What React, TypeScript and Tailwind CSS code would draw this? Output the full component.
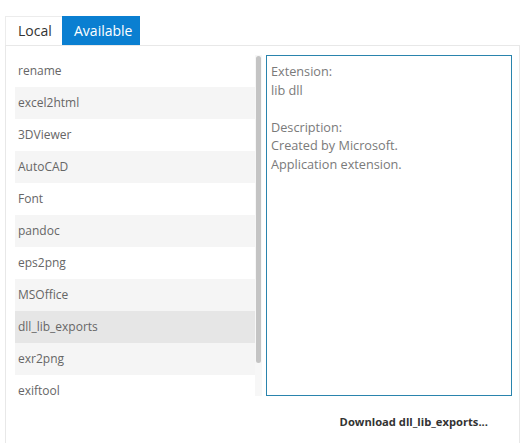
import React from 'react'

const packages = [
  'rename',
  'excel2html',
  '3DViewer',
  'AutoCAD',
  'Font',
  'pandoc',
  'eps2png',
  'MSOffice',
  'dll_lib_exports',
  'exr2png',
  'exiftool',
]

const selected = 'dll_lib_exports'

export default function App() {
  return (
    <div
      className="w-[522px] h-[443px] overflow-hidden bg-white pt-[16px] pl-[5px] pr-[2px]"
      style={{ fontFamily: '"Open Sans", "Noto Sans", sans-serif' }}
    >
      {/* Tabs */}
      <div className="flex h-[29px]">
        <div className="w-[57px] border-l border-t border-[#ececec] text-[14px] text-[#333] pl-[12px] leading-[28px]">
          Local
        </div>
        <div className="w-[78px] bg-[#0a7fd1] text-white text-[14px] pl-[12px] leading-[29px]">
          Available
        </div>
      </div>

      {/* Panel */}
      <div className="w-[515px] h-[420px] border border-[#e8e8e8] pt-[9px] pl-[9px]">
        <div className="flex">
          {/* Package list */}
          <div className="w-[240px] flex flex-col">
            {packages.map((name, i) => (
              <div
                key={name}
                className={
                  'h-[32px] pl-[3px] flex items-center text-[12px] text-[#666] ' +
                  (name === selected ? 'bg-[#e6e6e6]' : i % 2 === 1 ? 'bg-[#f5f5f5]' : 'bg-white')
                }
              >
                {name}
              </div>
            ))}
          </div>

          {/* Scrollbar */}
          <div className="w-[7px] h-[341px] bg-[#f7f7f7] pl-[1px] pt-[1px]">
            <div className="w-[5px] h-[307px] rounded-full bg-[#c4c4c4]" />
          </div>

          {/* Details */}
          <div className="flex flex-col ml-[4px]">
            <div className="w-[246px] h-[341px] border border-[#2a84ad] px-[4px] pt-[6px] text-[12.7px] leading-[18.6px] text-[#7a7a7a]">
              <div>Extension:</div>
              <div>lib dll</div>
              <div className="h-[18.6px]" />
              <div>Description:</div>
              <div>Created by Microsoft.</div>
              <div>Application extension.</div>
            </div>
            <div className="flex justify-end pr-[24px] pt-[17px]">
              <button className="text-[11.2px] font-bold text-[#333] leading-[18px]">
                Download dll_lib_exports...
              </button>
            </div>
          </div>
        </div>
      </div>
    </div>
  )
}
